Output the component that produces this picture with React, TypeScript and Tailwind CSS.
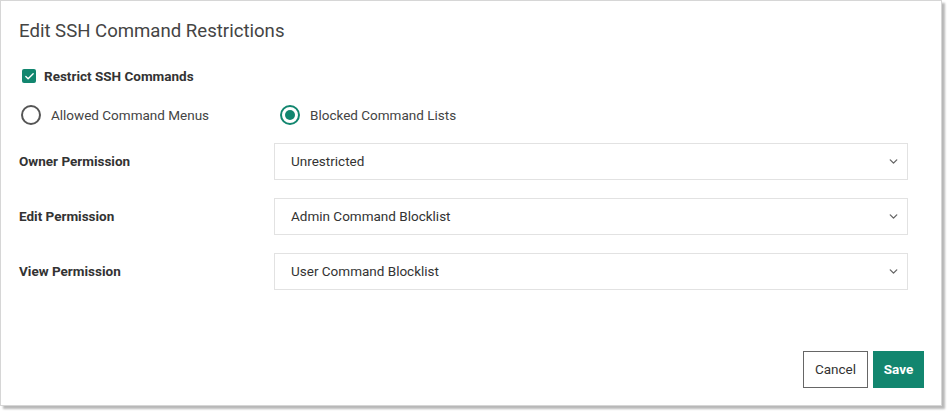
import React, { useState } from 'react';
import { ChevronDown, Check } from 'lucide-react';

const teal = 'bg-[#12866f]';

const permissions = [
  { label: 'Owner Permission', value: 'Unrestricted' },
  { label: 'Edit Permission', value: 'Admin Command Blocklist' },
  { label: 'View Permission', value: 'User Command Blocklist' },
];

const Radio = ({ checked, label, onClick }: { checked: boolean; label: string; onClick: () => void }) => (
  <button onClick={onClick} className="flex items-center h-5 text-left">
    <span
      className={`w-5 h-5 rounded-full border-2 flex items-center justify-center ${
        checked ? 'border-[#12866f]' : 'border-[#555]'
      }`}
    >
      {checked && <span className="w-[10px] h-[10px] rounded-full bg-[#12866f]" />}
    </span>
    <span className="ml-[10px] text-[13.5px] text-[#444]">{label}</span>
  </button>
);

export default function App() {
  const [restrict, setRestrict] = useState(true);
  const [mode, setMode] = useState<'menus' | 'lists'>('lists');

  return (
    <div className="w-[950px] h-[415px] bg-white font-['Roboto',sans-serif]">
      <div className="w-[942px] h-[406px] border border-[#d6d6d6] shadow-[3px_3px_2px_rgba(0,0,0,0.28)] bg-white flex flex-col pl-[18px] pr-[17px]">
        <h1 className="mt-[16px] h-7 leading-7 text-[18.6px] text-[#444]">Edit SSH Command Restrictions</h1>

        <label className="mt-[21px] h-5 flex items-center cursor-pointer" onClick={() => setRestrict(!restrict)}>
          <span className={`ml-[3px] w-[14px] h-[14px] rounded-[2px] flex items-center justify-center ${restrict ? teal : 'border border-[#555]'}`}>
            {restrict && <Check className="w-[11px] h-[11px] text-white" strokeWidth={3} />}
          </span>
          <span className="ml-[8px] text-[13.5px] font-bold text-[#333]">Restrict SSH Commands</span>
        </label>

        <div className="mt-[19px] flex items-center pl-[2px]">
          <div className="w-[259px]">
            <Radio checked={mode === 'menus'} label="Allowed Command Menus" onClick={() => setMode('menus')} />
          </div>
          <Radio checked={mode === 'lists'} label="Blocked Command Lists" onClick={() => setMode('lists')} />
        </div>

        <div className="mt-[18px] flex flex-col gap-[18px]">
          {permissions.map((p) => (
            <div key={p.label} className="flex items-center">
              <div className="w-[255px] text-[13.5px] font-bold text-[#333]">{p.label}</div>
              <div className="w-[634px] h-[37px] border border-[#e2e2e2] flex items-center justify-between pl-4 pr-[7px]">
                <span className="text-[13.5px] text-[#333]">{p.value}</span>
                <ChevronDown className="w-[13px] h-[13px] text-[#666]" strokeWidth={2.5} />
              </div>
            </div>
          ))}
        </div>

        <div className="mt-[61px] flex justify-end gap-[5px]">
          <button className="w-[65px] h-[37px] border border-[#666] text-[13.5px] text-[#333] bg-white">Cancel</button>
          <button className={`w-[51px] h-[37px] ${teal} text-[13.5px] font-bold text-white`}>Save</button>
        </div>
      </div>
    </div>
  );
}
